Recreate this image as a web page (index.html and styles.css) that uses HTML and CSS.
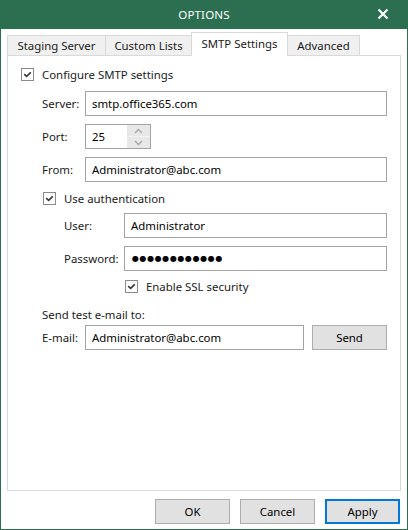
FILE: index.html
```html
<!DOCTYPE html>
<html>
<head>
<meta charset="utf-8">
<link rel="stylesheet" href="styles.css">
</head>
<body>
<div class="window">
  <div class="titlebar">
    <span class="title">OPTIONS</span>
    <svg class="close" width="12" height="12" viewBox="0 0 12 12"><path d="M1.5 1.5 L10.5 10.5 M10.5 1.5 L1.5 10.5" stroke="#fff" stroke-width="2.2" fill="none"/></svg>
  </div>
  <div class="content">
    <div class="tabs">
      <div class="tab t1">Staging Server</div>
      <div class="tab t2">Custom Lists</div>
      <div class="tab t3 active">SMTP Settings</div>
      <div class="tab t4">Advanced</div>
    </div>
    <div class="panel">
      <div class="row cbrow r-cb1">
        <span class="cb"><svg width="11" height="11" viewBox="0 0 11 11"><path d="M2.2 5.2 L4.6 7.4 L8.8 3.4" stroke="#3a3a3a" stroke-width="1.7" fill="none"/></svg></span>
        <span>Configure SMTP settings</span>
      </div>
      <div class="row field r-server">
        <span class="lbl w43">Server:</span>
        <div class="box grow">smtp.office365.com</div>
      </div>
      <div class="row field r-gap8">
        <span class="lbl w43">Port:</span>
        <div class="box spin">
          <span class="spinval">25</span>
          <span class="spinbtns">
            <span class="sb"><svg width="9" height="6" viewBox="0 0 9 6"><path d="M1 5 L4.5 1.5 L8 5" stroke="#a6a6a6" stroke-width="1.3" fill="none"/></svg></span>
            <span class="sb sb2"><svg width="9" height="6" viewBox="0 0 9 6"><path d="M1 1 L4.5 4.5 L8 1" stroke="#a6a6a6" stroke-width="1.3" fill="none"/></svg></span>
          </span>
        </div>
      </div>
      <div class="row field r-gap8">
        <span class="lbl w43">From:</span>
        <div class="box grow">Administrator@abc.com</div>
      </div>
      <div class="row cbrow r-auth">
        <span class="cb"><svg width="11" height="11" viewBox="0 0 11 11"><path d="M2.2 5.2 L4.6 7.4 L8.8 3.4" stroke="#3a3a3a" stroke-width="1.7" fill="none"/></svg></span>
        <span>Use authentication</span>
      </div>
      <div class="row field r-gap8 sub">
        <span class="lbl w60">User:</span>
        <div class="box grow">Administrator</div>
      </div>
      <div class="row field r-gap8 sub">
        <span class="lbl w60">Password:</span>
        <div class="box grow dots">●●●●●●●●●●●●</div>
      </div>
      <div class="row cbrow r-ssl">
        <span class="cb"><svg width="11" height="11" viewBox="0 0 11 11"><path d="M2.2 5.2 L4.6 7.4 L8.8 3.4" stroke="#3a3a3a" stroke-width="1.7" fill="none"/></svg></span>
        <span>Enable SSL security</span>
      </div>
      <div class="row plain r-send">Send test e-mail to:</div>
      <div class="row field r-email">
        <span class="lbl w43">E-mail:</span>
        <div class="box grow">Administrator@abc.com</div>
        <div class="btn send">Send</div>
      </div>
    </div>
    <div class="footer">
      <div class="btn">OK</div>
      <div class="btn">Cancel</div>
      <div class="btn default">Apply</div>
    </div>
  </div>
</div>
</body>
</html>
```

FILE: styles.css
```css
* { box-sizing: border-box; }
html, body { margin: 0; padding: 0; }
body {
  width: 408px;
  height: 530px;
  font-family: "Segoe UI", "Noto Sans", "Open Sans", sans-serif;
  font-size: 11.4px;
  color: #1a1a1a;
  background: #fff;
  overflow: hidden;
}
.window {
  width: 408px;
  height: 530px;
  border: 1px solid #2b6e50;
  border-top: none;
  display: flex;
  flex-direction: column;
}
.titlebar {
  height: 29px;
  margin: 0 -1px;
  background: #2b6e50;
  color: #fff;
  display: flex;
  align-items: center;
  justify-content: center;
  position: relative;
  flex: none;
}
.title { font-size: 11.6px; letter-spacing: 0.1px; }
.close { position: absolute; right: 19px; top: 8px; }
.content {
  flex: 1;
  padding: 0 6px;
  display: flex;
  flex-direction: column;
}
.tabs {
  display: flex;
  align-items: flex-end;
  height: 26px;
  position: relative;
  z-index: 1;
}
.tab {
  height: 20px;
  background: #f0f0f0;
  border: 1px solid #d9d9d9;
  border-bottom: none;
  margin-right: -1px;
  display: flex;
  align-items: center;
  justify-content: center;
  color: #1a1a1a;
}
.t1 { width: 99px; }
.t2 { width: 87px; }
.t3 { width: 97px; }
.t4 { width: 73px; }
.tab.active {
  height: 24px;
  background: #fff;
  margin-bottom: -1px;
  padding-bottom: 3px;
  position: relative;
  z-index: 2;
}
.panel {
  height: 436px;
  border: 1px solid #d9d9d9;
  padding: 12px 13px 0 13px;
  display: flex;
  flex-direction: column;
}
.row { display: flex; align-items: center; }
.cbrow { height: 13px; }
.cb {
  width: 13px;
  height: 13px;
  border: 1px solid #8a8a8a;
  background: #fff;
  display: flex;
  align-items: center;
  justify-content: center;
  margin-right: 8px;
  flex: none;
}
.field { height: 25px; padding-left: 21px; }
.field.sub { padding-left: 43px; }
.r-server { margin-top: 10px; }
.r-gap8 { margin-top: 8px; }
.r-auth { margin-top: 10px; padding-left: 22px; }
.r-ssl { margin-top: 9px; padding-left: 104px; }
.r-send { margin-top: 13px; height: 16px; padding-left: 21px; }
.r-email { margin-top: 3px; }
.lbl { flex: none; }
.w43 { width: 43px; }
.w60 { width: 60px; }
.box {
  height: 25px;
  border: 1px solid #a3a3a3;
  background: #fff;
  padding-left: 6px;
  display: flex;
  align-items: center;
  color: #000;
}
.grow { flex: 1; }
.dots { font-size: 8px; letter-spacing: 0.6px; padding-left: 7px; font-family: "DejaVu Sans", sans-serif; }
.spin { width: 66px; padding-left: 6px; padding-right: 0; }
.spinval { flex: 1; }
.spinbtns {
  width: 23px;
  height: 23px;
  display: flex;
  flex-direction: column;
  background: #e8e8e8;
}
.sb {
  flex: 1;
  display: flex;
  align-items: center;
  justify-content: center;
}
.sb2 { border-top: 1px solid #f4f4f4; }
.btn {
  width: 75px;
  height: 25px;
  background: #e1e1e1;
  border: 1px solid #adadad;
  display: flex;
  align-items: center;
  justify-content: center;
  color: #000;
  flex: none;
}
.send { margin-left: 8px; }
.footer {
  display: flex;
  justify-content: flex-end;
  gap: 10px;
  margin-top: 8px;
  padding-right: 1px;
}
.btn.default { border: 2px solid #0078d7; }
```
